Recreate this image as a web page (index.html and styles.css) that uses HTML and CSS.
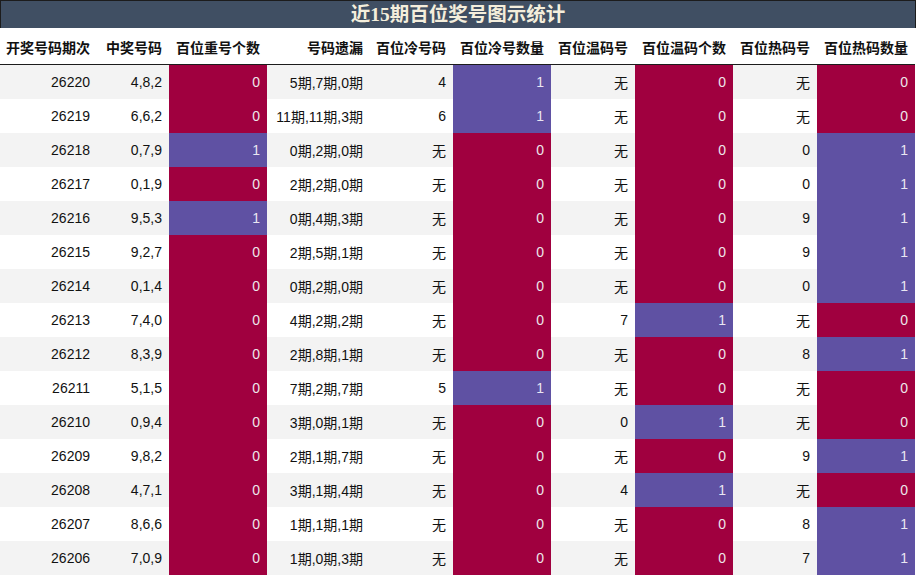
FILE: index.html
```html
<!DOCTYPE html>
<html lang="zh-CN">
<head>
<meta charset="utf-8">
<title>近15期百位奖号图示统计</title>
<link rel="stylesheet" href="styles.css">
</head>
<body>
<div class="wrap">
  <div class="title">近15期百位奖号图示统计</div>
  <table class="stats">
    <colgroup>
      <col class="c1"><col class="c2"><col class="c3"><col class="c4"><col class="c5">
      <col class="c6"><col class="c7"><col class="c8"><col class="c9"><col class="c10">
    </colgroup>
    <thead>
      <tr>
        <th>开奖号码期次</th><th>中奖号码</th><th>百位重号个数</th><th>号码遗漏</th><th>百位冷号码</th>
        <th>百位冷号数量</th><th>百位温码号</th><th>百位温码个数</th><th>百位热码号</th><th>百位热码数量</th>
      </tr>
    </thead>
    <tbody>
      <tr><td>26220</td><td>4,8,2</td><td class="r">0</td><td>5期,7期,0期</td><td>4</td><td class="p">1</td><td>无</td><td class="r">0</td><td>无</td><td class="r">0</td></tr>
      <tr><td>26219</td><td>6,6,2</td><td class="r">0</td><td>11期,11期,3期</td><td>6</td><td class="p">1</td><td>无</td><td class="r">0</td><td>无</td><td class="r">0</td></tr>
      <tr><td>26218</td><td>0,7,9</td><td class="p">1</td><td>0期,2期,0期</td><td>无</td><td class="r">0</td><td>无</td><td class="r">0</td><td>0</td><td class="p">1</td></tr>
      <tr><td>26217</td><td>0,1,9</td><td class="r">0</td><td>2期,2期,0期</td><td>无</td><td class="r">0</td><td>无</td><td class="r">0</td><td>0</td><td class="p">1</td></tr>
      <tr><td>26216</td><td>9,5,3</td><td class="p">1</td><td>0期,4期,3期</td><td>无</td><td class="r">0</td><td>无</td><td class="r">0</td><td>9</td><td class="p">1</td></tr>
      <tr><td>26215</td><td>9,2,7</td><td class="r">0</td><td>2期,5期,1期</td><td>无</td><td class="r">0</td><td>无</td><td class="r">0</td><td>9</td><td class="p">1</td></tr>
      <tr><td>26214</td><td>0,1,4</td><td class="r">0</td><td>0期,2期,0期</td><td>无</td><td class="r">0</td><td>无</td><td class="r">0</td><td>0</td><td class="p">1</td></tr>
      <tr><td>26213</td><td>7,4,0</td><td class="r">0</td><td>4期,2期,2期</td><td>无</td><td class="r">0</td><td>7</td><td class="p">1</td><td>无</td><td class="r">0</td></tr>
      <tr><td>26212</td><td>8,3,9</td><td class="r">0</td><td>2期,8期,1期</td><td>无</td><td class="r">0</td><td>无</td><td class="r">0</td><td>8</td><td class="p">1</td></tr>
      <tr><td>26211</td><td>5,1,5</td><td class="r">0</td><td>7期,2期,7期</td><td>5</td><td class="p">1</td><td>无</td><td class="r">0</td><td>无</td><td class="r">0</td></tr>
      <tr><td>26210</td><td>0,9,4</td><td class="r">0</td><td>3期,0期,1期</td><td>无</td><td class="r">0</td><td>0</td><td class="p">1</td><td>无</td><td class="r">0</td></tr>
      <tr><td>26209</td><td>9,8,2</td><td class="r">0</td><td>2期,1期,7期</td><td>无</td><td class="r">0</td><td>无</td><td class="r">0</td><td>9</td><td class="p">1</td></tr>
      <tr><td>26208</td><td>4,7,1</td><td class="r">0</td><td>3期,1期,4期</td><td>无</td><td class="r">0</td><td>4</td><td class="p">1</td><td>无</td><td class="r">0</td></tr>
      <tr><td>26207</td><td>8,6,6</td><td class="r">0</td><td>1期,1期,1期</td><td>无</td><td class="r">0</td><td>无</td><td class="r">0</td><td>8</td><td class="p">1</td></tr>
      <tr><td>26206</td><td>7,0,9</td><td class="r">0</td><td>1期,0期,3期</td><td>无</td><td class="r">0</td><td>无</td><td class="r">0</td><td>7</td><td class="p">1</td></tr>
    </tbody>
  </table>
</div>
</body>
</html>
```
FILE: styles.css
```css
html, body {
  margin: 0;
  padding: 0;
  background: #ffffff;
}
.wrap {
  width: 916px;
}
.title {
  box-sizing: border-box;
  height: 28px;
  border: 1px solid #1c1c1c;
  border-bottom: none;
  background: #404f63;
  color: #f4eedc;
  font-family: "Liberation Serif", "Noto Sans CJK SC", serif;
  font-weight: bold;
  font-size: 19.5px;
  line-height: 27px;
  text-align: center;
}
.stats {
  width: 915px;
  table-layout: fixed;
  border-collapse: collapse;
  border-spacing: 0;
  margin-top: 1px;
  font-family: "Liberation Sans", "Noto Sans CJK SC", sans-serif;
  font-size: 14px;
  color: #111;
}
.c1 { width: 97px; }
.c2 { width: 72px; }
.c3 { width: 98px; }
.c4 { width: 103px; }
.c5 { width: 83px; }
.c6 { width: 98px; }
.c7 { width: 84px; }
.c8 { width: 98px; }
.c9 { width: 84px; }
.c10 { width: 98px; }
.stats th {
  height: 35px;
  padding: 0 7px 0 0;
  text-align: right;
  font-weight: bold;
  border-bottom: 1px solid #1c1c1c;
  white-space: nowrap;
  background: #fff;
}
.stats td {
  height: 34px;
  padding: 0 7px 0 0;
  text-align: right;
  white-space: nowrap;
  box-sizing: border-box;
}
.stats tbody tr:nth-child(odd) td { background: #f3f3f3; }
.stats tbody tr:nth-child(even) td { background: #ffffff; }
.stats tbody tr td.r { background: #a0003f; color: #ede6ea; }
.stats tbody tr td.p { background: #5f51a3; color: #e9e6f2; }
```
